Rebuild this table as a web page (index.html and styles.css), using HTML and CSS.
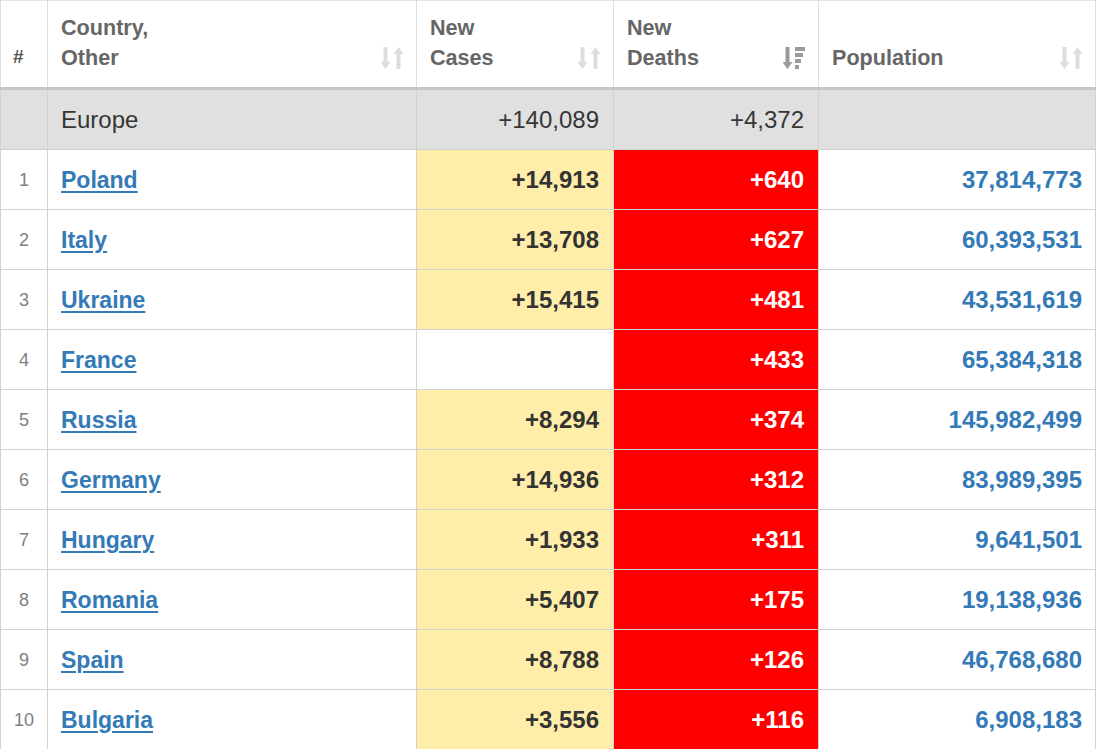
FILE: index.html
```html
<!DOCTYPE html>
<html lang="en">
<head>
<meta charset="utf-8">
<title>Europe</title>
<link rel="stylesheet" href="styles.css">
</head>
<body>
<table class="grid">
  <colgroup>
    <col class="c-rank"><col class="c-country"><col class="c-cases"><col class="c-deaths"><col class="c-pop">
  </colgroup>
  <thead>
    <tr>
      <th class="rank-h"><span class="hash">#</span></th>
      <th><div class="th-in"><span>Country,<br>Other</span><svg class="sort" viewBox="0 0 22 24"><path d="M2.5 1h4v15h3l-5 7-5-7h3z"/><path d="M15.5 8v15h4V8h3l-5-7-5 7z"/></svg></div></th>
      <th><div class="th-in"><span>New<br>Cases</span><svg class="sort" viewBox="0 0 22 24"><path d="M2.5 1h4v15h3l-5 7-5-7h3z"/><path d="M15.5 8v15h4V8h3l-5-7-5 7z"/></svg></div></th>
      <th><div class="th-in"><span>New<br>Deaths</span><svg class="sort active" viewBox="0 0 22 24"><path d="M2.5 1h4v15h3l-5 7-5-7h3z"/><path d="M12 1h10v4H12zM12 7h8v4h-8zM12 13h6v4h-6zM12 19h4v4h-4z"/></svg></div></th>
      <th><div class="th-in"><span>Population</span><svg class="sort" viewBox="0 0 22 24"><path d="M2.5 1h4v15h3l-5 7-5-7h3z"/><path d="M15.5 8v15h4V8h3l-5-7-5 7z"/></svg></div></th>
    </tr>
  </thead>
  <tbody>
    <tr class="total">
      <td></td>
      <td class="name">Europe</td>
      <td class="num">+140,089</td>
      <td class="num">+4,372</td>
      <td></td>
    </tr>
    <tr><td class="rank">1</td><td class="name"><a href="#">Poland</a></td><td class="num cases">+14,913</td><td class="num deaths">+640</td><td class="num pop">37,814,773</td></tr>
    <tr><td class="rank">2</td><td class="name"><a href="#">Italy</a></td><td class="num cases">+13,708</td><td class="num deaths">+627</td><td class="num pop">60,393,531</td></tr>
    <tr><td class="rank">3</td><td class="name"><a href="#">Ukraine</a></td><td class="num cases">+15,415</td><td class="num deaths">+481</td><td class="num pop">43,531,619</td></tr>
    <tr><td class="rank">4</td><td class="name"><a href="#">France</a></td><td class="num"></td><td class="num deaths">+433</td><td class="num pop">65,384,318</td></tr>
    <tr><td class="rank">5</td><td class="name"><a href="#">Russia</a></td><td class="num cases">+8,294</td><td class="num deaths">+374</td><td class="num pop">145,982,499</td></tr>
    <tr><td class="rank">6</td><td class="name"><a href="#">Germany</a></td><td class="num cases">+14,936</td><td class="num deaths">+312</td><td class="num pop">83,989,395</td></tr>
    <tr><td class="rank">7</td><td class="name"><a href="#">Hungary</a></td><td class="num cases">+1,933</td><td class="num deaths">+311</td><td class="num pop">9,641,501</td></tr>
    <tr><td class="rank">8</td><td class="name"><a href="#">Romania</a></td><td class="num cases">+5,407</td><td class="num deaths">+175</td><td class="num pop">19,138,936</td></tr>
    <tr><td class="rank">9</td><td class="name"><a href="#">Spain</a></td><td class="num cases">+8,788</td><td class="num deaths">+126</td><td class="num pop">46,768,680</td></tr>
    <tr><td class="rank">10</td><td class="name"><a href="#">Bulgaria</a></td><td class="num cases">+3,556</td><td class="num deaths">+116</td><td class="num pop">6,908,183</td></tr>
  </tbody>
</table>
</body>
</html>
```
FILE: styles.css
```css
html, body {
  margin: 0;
  padding: 0;
  background: #ffffff;
}

.grid {
  border-collapse: collapse;
  table-layout: fixed;
  width: 1095px;
  font-family: "Liberation Sans", Arial, sans-serif;
  font-size: 24px;
  color: #363636;
  border: 1px solid #e4e4e4;
}

.c-rank { width: 47px; }
.c-country { width: 369px; }
.c-cases { width: 197px; }
.c-deaths { width: 205px; }
.c-pop { width: 277px; }

th {
  height: 60px;
  padding: 12px 13px 14px;
  text-align: left;
  vertical-align: bottom;
  font-weight: bold;
  font-size: 21.6px;
  line-height: 30px;
  color: #666666;
  border-left: 1px solid #dedede;
  border-right: 1px solid #dedede;
  border-bottom: 3px solid #c6c6c6;
  background: #ffffff;
}

.rank-h {
  padding-left: 12px;
  padding-right: 0;
  font-size: 19px;
  color: #555555;
}

.hash {
  display: block;
  margin-bottom: 1px;
}

.th-in {
  display: flex;
  justify-content: space-between;
  align-items: flex-end;
}

.sort {
  width: 22px;
  height: 24px;
  margin-bottom: 3px;
  fill: #dddddd;
  flex: none;
}

.sort.active {
  fill: #9a9a9a;
}

td {
  height: 59px;
  padding: 0 14px 0 13px;
  vertical-align: middle;
  border: 1px solid #d2d2d2;
  line-height: 26px;
}

.total td {
  background: #e0e0e0;
  font-weight: normal;
  color: #363636;
}

.num {
  text-align: right;
  font-weight: bold;
}

.total .num {
  font-weight: normal;
}

.rank {
  padding: 0;
  text-align: center;
  font-size: 18px;
  color: #808080;
}

.name a {
  color: #337ab7;
  font-weight: bold;
  font-size: 23px;
  text-decoration: underline;
  text-decoration-thickness: 2px;
  text-underline-offset: 3px;
}

.cases {
  background: #ffeeaa;
  color: #333333;
}

.deaths {
  background: #ff0000;
  color: #ffffff;
}

.pop {
  color: #337ab7;
  padding-right: 13px;
}
```
